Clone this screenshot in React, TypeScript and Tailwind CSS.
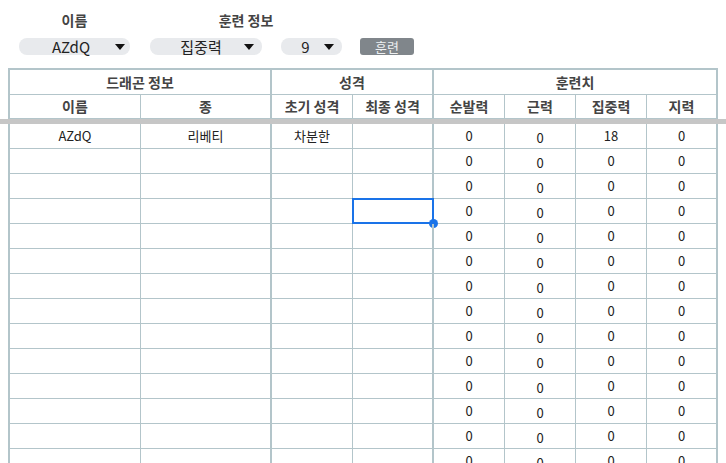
import { ReactNode } from "react";

const font = { fontFamily: '"Noto Sans CJK KR", "Noto Sans", sans-serif' };

// column widths include each cell's right border
const cols = [
  "w-[131px] border-r",
  "w-[131px] border-r-2",
  "w-[81px] border-r",
  "w-[81px] border-r-2",
  "w-[71px] border-r",
  "w-[71px] border-r",
  "w-[71px] border-r",
  "w-[69px]",
];

type Row = string[];

const rows: Row[] = [
  ["AZdQ", "리베티", "차분한", "", "0", "0", "18", "0"],
  ...Array.from({ length: 13 }, () => ["", "", "", "", "0", "0", "0", "0"]),
];

const Caret = () => (
  <svg width="10" height="6" viewBox="0 0 10 6" className="shrink-0">
    <path d="M0 0 H10 L5 6 Z" fill="#111" />
  </svg>
);

const Chip = ({ value, width, pad }: { value: string; width: string; pad: string }) => (
  <div className={`flex h-[17px] items-center rounded-lg bg-[#e8eaed] ${width} ${pad}`}>
    <span className="flex-1 text-center text-[15px] leading-none text-[#222]">{value}</span>
    <Caret />
  </div>
);

const HeadCell = ({ className, children }: { className: string; children: ReactNode }) => (
  <div
    className={`flex items-center justify-center border-[#b3c5ca] text-[14px] font-semibold text-[#444] ${className}`}
  >
    {children}
  </div>
);

export default function App() {
  return (
    <div className="h-[463px] w-[726px] overflow-hidden bg-white" style={font}>
      {/* toolbar */}
      <div className="flex h-[68px] items-start pt-[11px]">
        <div className="ml-[19px] flex w-[111px] flex-col items-center gap-[9px]">
          <span className="text-[14px] font-semibold leading-[18px] text-[#444]">이름</span>
          <Chip value="AZdQ" width="w-[111px]" pad="pl-[8px] pr-[5px]" />
        </div>
        <div className="ml-[20px] flex flex-col items-center gap-[9px]">
          <span className="text-[14px] font-semibold leading-[18px] text-[#444]">훈련 정보</span>
          <div className="flex items-center">
            <Chip value="집중력" width="w-[112px]" pad="pl-[8px] pr-[8px]" />
            <div className="ml-[19px]">
              <Chip value="9" width="w-[61px]" pad="pl-[6px] pr-[8px]" />
            </div>
          </div>
        </div>
        <div className="ml-[18px] mt-[27px] flex h-[17px] w-[54px] items-center justify-center rounded-[3px] bg-[#80868b] text-[13px] leading-none text-[#eef0f2]">
          훈련
        </div>
      </div>

      {/* frozen header */}
      <div className="ml-[8px] w-[710px] border-x-2 border-t-2 border-[#b3c5ca]">
        <div className="flex h-[25px] border-b border-[#b3c5ca]">
          <HeadCell className="w-[262px] border-r-2">드래곤 정보</HeadCell>
          <HeadCell className="w-[162px] border-r-2">성격</HeadCell>
          <HeadCell className="flex-1">훈련치</HeadCell>
        </div>
        <div className="flex h-[24px] border-b border-[#b3c5ca]">
          {["이름", "종", "초기 성격", "최종 성격", "순발력", "근력", "집중력", "지력"].map((t, i) => (
            <HeadCell key={t} className={cols[i]}>
              {t}
            </HeadCell>
          ))}
        </div>
      </div>

      <div className="h-[5px] w-full bg-[#c6c6c6]" />

      {/* body */}
      <div className="ml-[8px] w-[710px] border-x-2 border-[#b3c5ca]">
        {rows.map((row, r) => (
          <div key={r} className="flex h-[25px] border-b border-[#b3c5ca]">
            {row.map((v, c) => (
              <div
                key={c}
                className={`relative flex items-center justify-center border-[#b3c5ca] text-[13px] text-[#222] ${cols[c]} ${c === 5 ? "pt-[3px]" : ""}`}
              >
                {v}
                {r === 3 && c === 3 && (
                  <>
                    <div className="absolute -left-px -top-px h-[26px] w-[82px] border-2 border-[#1a73e8]" />
                    <div className="absolute left-[76px] top-[20px] h-[9px] w-[9px] rounded-full bg-[#1a73e8]" />
                  </>
                )}
              </div>
            ))}
          </div>
        ))}
      </div>
    </div>
  );
}
